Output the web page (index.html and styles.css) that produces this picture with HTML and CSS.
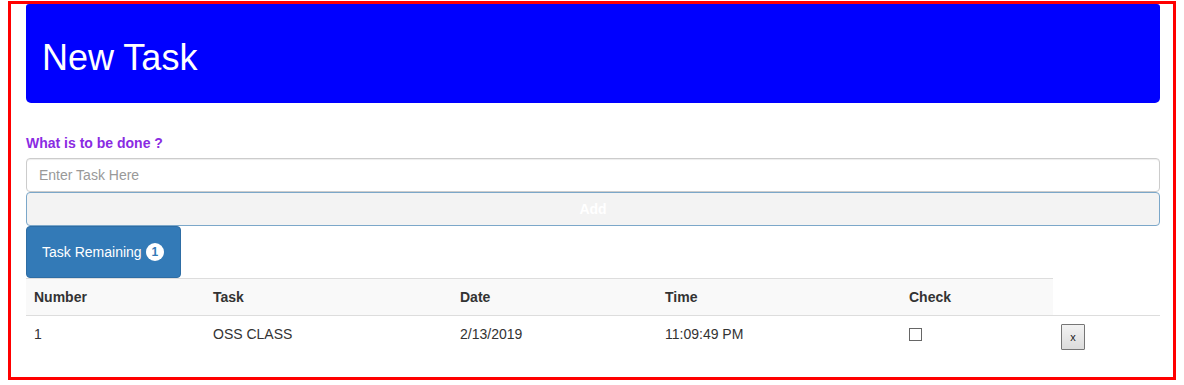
FILE: index.html
```html
<!DOCTYPE html>
<html>
<head>
<meta charset="utf-8">
<title>New Task</title>
<link rel="stylesheet" href="styles.css">
</head>
<body>
<div class="frame">
  <div class="jumbo"><h1 class="jumbo-title">New Task</h1></div>
  <form class="task-form">
    <label class="form-label" for="task">What is to be done ?</label>
    <input class="task-input" id="task" type="text" placeholder="Enter Task Here">
    <button class="add-btn" type="button">Add</button>
  </form>
  <button class="remain-btn" type="button">Task Remaining <span class="badge">1</span></button>
  <table class="tasks">
    <colgroup>
      <col class="c1"><col class="c2"><col class="c3"><col class="c4"><col class="c5"><col class="c6">
    </colgroup>
    <thead>
      <tr><th>Number</th><th>Task</th><th>Date</th><th>Time</th><th>Check</th></tr>
    </thead>
    <tbody>
      <tr>
        <td>1</td><td>OSS CLASS</td><td>2/13/2019</td><td>11:09:49 PM</td>
        <td><input class="check" type="checkbox"></td>
        <td><button class="del-btn" type="button">x</button></td>
      </tr>
    </tbody>
  </table>
</div>
</body>
</html>
```
FILE: styles.css
```css
* { box-sizing: border-box; }
html, body { height: 100%; }
body {
  margin: 1px 8px 0 8px;
  font-family: "Liberation Sans", Arial, Helvetica, sans-serif;
  font-size: 14px;
  line-height: 20px;
  color: #333;
  background: #fff;
}
.frame {
  border: 3px solid #ff0000;
  padding: 0 13px 0 15px;
}
.jumbo {
  background: #0000ff;
  border-radius: 3px 3px 5px 5px;
  height: 99px;
  padding: 34px 15px 0 16px;
}
.jumbo-title {
  margin: 0;
  color: #fff;
  font-weight: normal;
  font-size: 36px;
  line-height: 40px;
}
.task-form {
  margin: 30px 0 0 0;
  display: flex;
  flex-direction: column;
}
.form-label {
  font-weight: bold;
  color: #8a2be2;
  margin-bottom: 5px;
  line-height: 20px;
}
.task-input {
  height: 34px;
  border: 1px solid #ccc;
  border-radius: 4px;
  padding: 6px 12px;
  font: inherit;
  color: #555;
  box-shadow: inset 0 1px 1px rgba(0,0,0,.075);
}
.task-input::placeholder { color: #999; }
.add-btn {
  height: 34px;
  background: #f3f3f3;
  border: 1px solid #7ba7c9;
  border-radius: 4px;
  color: #fff;
  font: inherit;
  font-weight: bold;
}
.remain-btn {
  display: block;
  height: 52px;
  padding: 0 16px 0 15px;
  background: #337ab7;
  border: 1px solid #2e6da4;
  border-radius: 4px;
  color: #fff;
  font: inherit;
  white-space: nowrap;
}
.badge {
  display: inline-block;
  min-width: 10px;
  padding: 3px 6px;
  font-size: 12px;
  font-weight: bold;
  line-height: 12px;
  color: #337ab7;
  background: #fff;
  border-radius: 10px;
  position: relative;
  top: -1px;
}
.tasks {
  width: 100%;
  table-layout: fixed;
  border-collapse: collapse;
  border-spacing: 0;
  margin-bottom: 19px;
}
.c1 { width: 179px; }
.c2 { width: 247px; }
.c3 { width: 205px; }
.c4 { width: 244px; }
.c5 { width: 152px; }
.c6 { width: 107px; }
.tasks th {
  text-align: left;
  font-weight: bold;
  background: #f9f9f9;
  border-top: 1px solid #ddd;
  padding: 8px;
  vertical-align: bottom;
}
.tasks td {
  padding: 8px;
  border-top: 1px solid #ddd;
  vertical-align: top;
}
.check {
  -webkit-appearance: none;
  appearance: none;
  display: block;
  width: 13px;
  height: 13px;
  margin: 4px 0 0 0;
  border: 1px solid #666;
  background: #fff;
}
.del-btn {
  display: block;
  width: 24px;
  height: 26px;
  padding: 0;
  border: 1px solid #767676;
  border-radius: 1px;
  background: linear-gradient(#f2f2f2, #dcdcdc);
  font-family: "Liberation Sans", Arial, sans-serif;
  font-size: 11px;
  color: #222;
}
```
